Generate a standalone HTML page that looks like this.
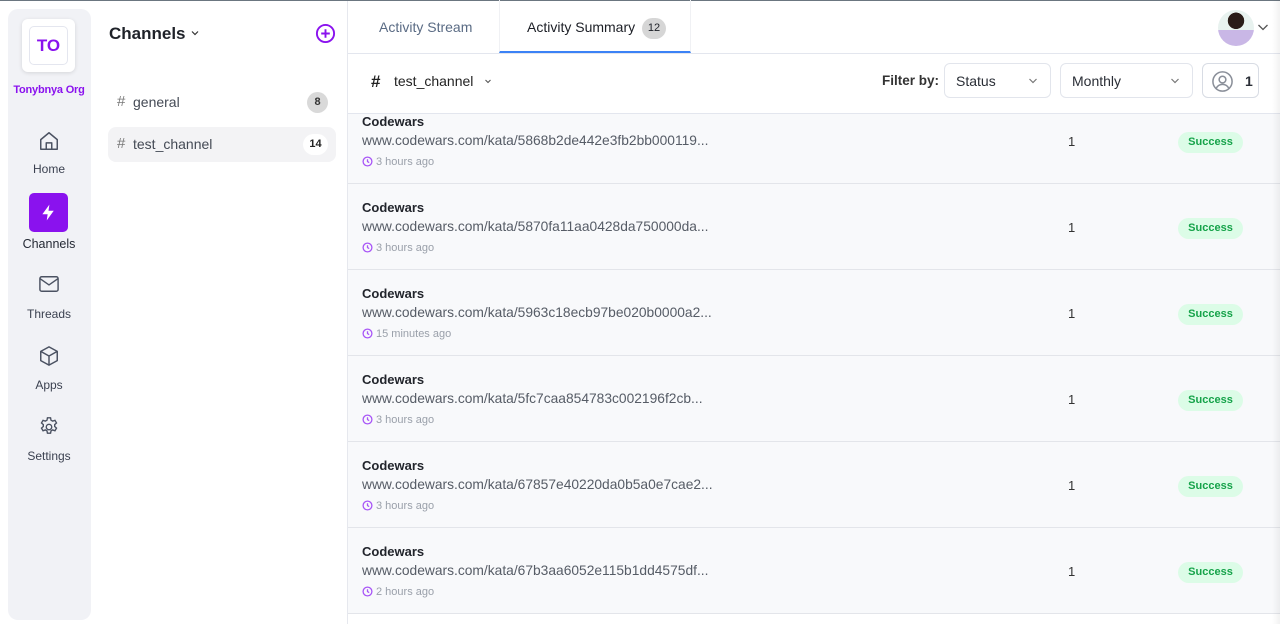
<!DOCTYPE html>
<html><head><meta charset="utf-8"><style>
*{box-sizing:border-box;margin:0;padding:0}
body{width:1280px;height:624px;overflow:hidden;background:#fff;font-family:"Liberation Sans",sans-serif;position:relative;color:#1f2229}
.topline{position:absolute;left:0;top:0;width:1280px;height:1px;background:#6b7680}
.rail{position:absolute;left:8px;top:9px;width:83px;height:611px;background:#f1f2f6;border-radius:10px}
.logo{position:absolute;left:22px;top:19px;width:53px;height:53px;background:#fff;border-radius:6px;box-shadow:0 1px 4px rgba(0,0,0,.12)}
.logo div{position:absolute;left:7px;top:7px;width:39px;height:39px;border:1px solid #e4e6ef;border-radius:5px;color:#8a12ee;font-weight:bold;font-size:17px;text-align:center;line-height:38px}
.org{position:absolute;left:0;width:98px;top:84px;text-align:center;color:#8a12ee;font-size:11px;font-weight:bold;letter-spacing:-.2px}
.nav{position:absolute;left:0;width:98px;text-align:center;font-size:12px;color:#3b4150}
.nav svg{display:block;margin:0 auto}
.chpanel{position:absolute;left:91px;top:1px;width:257px;height:623px;border-right:1px solid #e6e8ee}
.chtitle{position:absolute;left:109px;top:24px;font-size:17px;font-weight:bold;color:#1f2229}
.ch{position:absolute;left:108px;width:228px;height:35px;border-radius:8px;font-size:14px;color:#444a55}
.ch .h{position:absolute;left:9px;top:8px;color:#777;font-size:15px}
.ch .n{position:absolute;left:25px;top:9px}
.ch .b{position:absolute;right:8px;top:7px;width:21px;height:21px;border-radius:11px;font-size:11px;font-weight:bold;text-align:center;line-height:21px}
.tab{position:absolute;top:0;height:53px;font-size:14px;line-height:54px}
.hdrline{position:absolute;left:348px;top:53px;width:932px;height:1px;background:#e3e6ee}
.fline{position:absolute;left:348px;top:113px;width:932px;height:1px;background:#e3e6ee}
.sel{position:absolute;top:63px;height:35px;border:1px solid #e2e5ec;border-radius:6px;font-size:14px;line-height:34px;padding-left:11px;color:#2a2e36}
.sel svg{position:absolute;right:12px;top:13px}
.list{position:absolute;left:348px;top:114px;width:932px;height:510px;background:#f8f9fb;overflow:hidden}
.row{position:absolute;left:0;width:932px;height:86px;border-bottom:1px solid #e3e5ea}
.t{position:absolute;left:14px;top:16px;font-size:13px;font-weight:bold;color:#22252c}
.u{position:absolute;left:14px;top:35px;font-size:13.8px;color:#565c66}
.tm{position:absolute;left:14px;top:58px;font-size:11px;color:#9aa0aa}
.tm svg{vertical-align:-2px;margin-right:3px}
.one{position:absolute;left:720px;top:36px;font-size:13px;color:#333}
.pill{position:absolute;left:830px;top:34px;width:65px;height:21px;border-radius:11px;background:#dcfce7;color:#16a34a;font-size:11px;font-weight:bold;text-align:center;line-height:21px}
</style></head><body>
<div class="topline"></div>
<div class="rail"></div>
<div class="logo"><div>TO</div></div>
<div class="org">Tonybnya Org</div>
<div class="nav" style="top:130px"><svg width="22" height="22" viewBox="0 0 24 24" fill="none" stroke="#4b5262" stroke-width="1.6" stroke-linejoin="round"><path d="M3 10.5 12 3l9 7.5V21H3z"/><path d="M9 21v-7h6v7"/></svg><div style="margin-top:10px">Home</div></div>
<div style="position:absolute;left:29px;top:193px;width:39px;height:39px;border-radius:5px;background:#8a12ee"></div>
<svg style="position:absolute;left:38px;top:202px" width="21" height="21" viewBox="0 0 24 24"><path d="M13 3 5 14h6l-1 7 8-11h-6z" fill="#fff"/></svg>
<div class="nav" style="top:237px;font-size:12.5px;color:#252a35">Channels</div>
<div class="nav" style="top:274px"><svg width="22" height="20" viewBox="0 0 24 22" fill="none" stroke="#4b5262" stroke-width="1.6"><rect x="2" y="3" width="20" height="16" rx="2"/><path d="m2 5 10 7 10-7"/></svg><div style="margin-top:13px">Threads</div></div>
<div class="nav" style="top:345px"><svg width="22" height="22" viewBox="0 0 24 24" fill="none" stroke="#4b5262" stroke-width="1.6" stroke-linejoin="round"><path d="M12 2 21 7v10l-9 5-9-5V7z"/><path d="M3 7l9 5 9-5M12 12v10"/></svg><div style="margin-top:11px">Apps</div></div>
<div class="nav" style="top:416px"><svg width="22" height="22" viewBox="0 0 24 24" fill="none" stroke="#4b5262" stroke-width="1.5"><path d="M10.3 2h3.4l.5 2.6 1.8 1 2.5-.9 1.7 2.9-2 1.8v2l2 1.8-1.7 2.9-2.5-.9-1.8 1-.5 2.6h-3.4l-.5-2.6-1.8-1-2.5.9-1.7-2.9 2-1.8v-2l-2-1.8 1.7-2.9 2.5.9 1.8-1z"/><circle cx="12" cy="12" r="3"/></svg><div style="margin-top:11px">Settings</div></div>

<div class="chpanel"></div>
<div class="chtitle">Channels <svg width="10" height="10" viewBox="0 0 10 10" style="vertical-align:1px"><path d="M2 3.5 5 6.5 8 3.5" stroke="#333" fill="none" stroke-width="1.2"/></svg></div>
<svg style="position:absolute;left:315px;top:23px" width="21" height="21" viewBox="0 0 22 22" fill="none" stroke="#8a12ee" stroke-width="2"><circle cx="11" cy="11" r="9"/><path d="M11 6.5v9M6.5 11h9"/></svg>
<div class="ch" style="top:85px"><span class="h">#</span><span class="n">general</span><span class="b" style="background:#d9d9d9;color:#333">8</span></div>
<div class="ch" style="top:127px;background:#f3f3f5"><span class="h">#</span><span class="n">test_channel</span><span class="b" style="background:#fff;color:#222;width:25px">14</span></div>

<div class="tab" style="left:379px;color:#5a6b84">Activity Stream</div>
<div class="tab" style="left:499px;width:192px;border-bottom:2px solid #3b82f6;border-left:1px solid #f0f1f4;border-right:1px solid #f0f1f4;padding-left:27px;color:#1c1f26">Activity Summary <span style="display:inline-block;width:24px;height:21px;border-radius:11px;background:#d6d6d6;font-size:11px;text-align:center;line-height:21px;margin-left:3px;vertical-align:1px">12</span></div>
<div style="position:absolute;left:1218px;top:10px;width:36px;height:36px;border-radius:50%;background:radial-gradient(circle at 50% 30%,#2a1c18 0 26%,transparent 27%),linear-gradient(#e8f2ef 0 55%,#c9b7e6 56%);"></div>
<svg style="position:absolute;left:1257px;top:22px" width="12" height="10" viewBox="0 0 12 10"><path d="M1.5 3 6 7.5 10.5 3" stroke="#555" fill="none" stroke-width="1.3"/></svg>
<div class="hdrline"></div>

<div style="position:absolute;left:371px;top:72px;font-size:17px;font-weight:bold;color:#222">#</div>
<div style="position:absolute;left:394px;top:73px;font-size:14px;color:#222">test_channel <svg width="10" height="10" viewBox="0 0 10 10" style="margin-left:6px"><path d="M2.5 4 5 6.5 7.5 4" stroke="#555" fill="none" stroke-width="1.1"/></svg></div>
<div style="position:absolute;left:882px;top:73px;font-size:13.5px;font-weight:bold;color:#333">Filter by:</div>
<div class="sel" style="left:944px;width:107px">Status<svg width="10" height="8" viewBox="0 0 10 8"><path d="M1.5 2 5 5.5 8.5 2" stroke="#777" fill="none" stroke-width="1.2"/></svg></div>
<div class="sel" style="left:1060px;width:133px">Monthly<svg width="10" height="8" viewBox="0 0 10 8"><path d="M1.5 2 5 5.5 8.5 2" stroke="#777" fill="none" stroke-width="1.2"/></svg></div>
<div class="sel" style="left:1202px;width:57px;border-color:#d8dce4"><svg style="position:absolute;left:8px;top:6px" width="23" height="23" viewBox="0 0 24 24" fill="none" stroke="#8a8f99" stroke-width="1.6"><circle cx="12" cy="12" r="10"/><circle cx="12" cy="10" r="3.5"/><path d="M5.5 19c1.5-3 4-4 6.5-4s5 1 6.5 4"/></svg><span style="position:absolute;left:42px;font-weight:bold">1</span></div>
<div class="fline"></div>

<div class="list">
<div class="row" style="top:-16px"><div class="t">Codewars</div><div class="u">www.codewars.com/kata/5868b2de442e3fb2bb000119...</div><div class="tm"><svg width="11" height="11" viewBox="0 0 12 12" fill="none" stroke="#a855f7" stroke-width="1.4"><circle cx="6" cy="6" r="4.8"/><path d="M6 3.5V6l1.8 1.2"/></svg>3 hours ago</div><div class="one">1</div><div class="pill">Success</div></div>
<div class="row" style="top:70px"><div class="t">Codewars</div><div class="u">www.codewars.com/kata/5870fa11aa0428da750000da...</div><div class="tm"><svg width="11" height="11" viewBox="0 0 12 12" fill="none" stroke="#a855f7" stroke-width="1.4"><circle cx="6" cy="6" r="4.8"/><path d="M6 3.5V6l1.8 1.2"/></svg>3 hours ago</div><div class="one">1</div><div class="pill">Success</div></div>
<div class="row" style="top:156px"><div class="t">Codewars</div><div class="u">www.codewars.com/kata/5963c18ecb97be020b0000a2...</div><div class="tm"><svg width="11" height="11" viewBox="0 0 12 12" fill="none" stroke="#a855f7" stroke-width="1.4"><circle cx="6" cy="6" r="4.8"/><path d="M6 3.5V6l1.8 1.2"/></svg>15 minutes ago</div><div class="one">1</div><div class="pill">Success</div></div>
<div class="row" style="top:242px"><div class="t">Codewars</div><div class="u">www.codewars.com/kata/5fc7caa854783c002196f2cb...</div><div class="tm"><svg width="11" height="11" viewBox="0 0 12 12" fill="none" stroke="#a855f7" stroke-width="1.4"><circle cx="6" cy="6" r="4.8"/><path d="M6 3.5V6l1.8 1.2"/></svg>3 hours ago</div><div class="one">1</div><div class="pill">Success</div></div>
<div class="row" style="top:328px"><div class="t">Codewars</div><div class="u">www.codewars.com/kata/67857e40220da0b5a0e7cae2...</div><div class="tm"><svg width="11" height="11" viewBox="0 0 12 12" fill="none" stroke="#a855f7" stroke-width="1.4"><circle cx="6" cy="6" r="4.8"/><path d="M6 3.5V6l1.8 1.2"/></svg>3 hours ago</div><div class="one">1</div><div class="pill">Success</div></div>
<div class="row" style="top:414px"><div class="t">Codewars</div><div class="u">www.codewars.com/kata/67b3aa6052e115b1dd4575df...</div><div class="tm"><svg width="11" height="11" viewBox="0 0 12 12" fill="none" stroke="#a855f7" stroke-width="1.4"><circle cx="6" cy="6" r="4.8"/><path d="M6 3.5V6l1.8 1.2"/></svg>2 hours ago</div><div class="one">1</div><div class="pill">Success</div></div>
<div style="position:absolute;left:0;top:500px;width:932px;height:10px;background:#fff"></div>
</div>
<div style="position:absolute;left:1272px;top:0;width:8px;height:624px;background:linear-gradient(90deg,rgba(0,0,0,0),rgba(0,0,0,.05))"></div>
</body></html>
